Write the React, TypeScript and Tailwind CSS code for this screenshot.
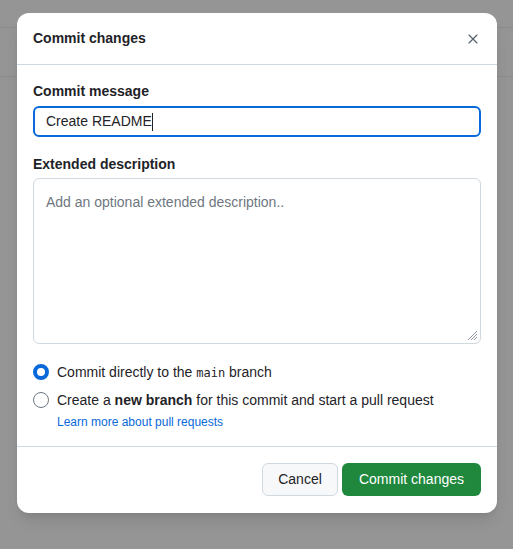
import React from 'react';
import { X } from 'lucide-react';

const Radio: React.FC<{ checked?: boolean }> = ({ checked }) =>
  checked ? (
    <span className="w-4 h-4 rounded-full border-[4px] border-[#0969da] bg-white shrink-0" />
  ) : (
    <span className="w-4 h-4 rounded-full border border-[#6e7781] bg-white shrink-0" />
  );

export default function App() {
  return (
    <div
      className="relative w-[513px] h-[549px] bg-[#959595] overflow-hidden"
      style={{ fontFamily: '"Liberation Sans", Arial, sans-serif' }}
    >
      {/* page behind the overlay */}
      <div className="absolute left-0 right-0 top-[27px] h-px bg-[#8a8a8a]" />
      <div className="absolute left-0 right-0 top-[76px] h-px bg-[#8a8a8a]" />

      <div className="absolute left-[17px] top-[13px] w-[480px] h-[500px] bg-white rounded-[12px] shadow-lg flex flex-col text-[#1f2328]">
        <div className="h-[52px] flex items-center justify-between pl-4 pr-4 border-b border-[#d1d9e0]">
          <h1 className="text-[14px] font-semibold">Commit changes</h1>
          <X className="w-4 h-4 text-[#59636e]" strokeWidth={1.75} />
        </div>

        <div className="px-4 pt-[16px] flex flex-col">
          <label className="text-[14px] font-semibold leading-5">Commit message</label>
          <div className="mt-[5px] h-[31px] rounded-[6px] border-2 border-[#0969da] flex items-center pl-[11px] text-[14px]">
            Create README<span className="w-px h-[18px] bg-[#1f2328]" />
          </div>

          <label className="mt-[17px] text-[14px] font-semibold leading-5">Extended description</label>
          <div className="relative mt-[4px] h-[166px] rounded-[6px] border border-[#d1d9e0] px-3 pt-[13px] text-[14px] text-[#6e7781]">
            Add an optional extended description..
            <svg className="absolute right-[2px] bottom-[2px]" width="12" height="12" viewBox="0 0 12 12">
              <path d="M11 2L2 11M11 5L5 11M11 8L8 11" stroke="#8c959f" strokeWidth="1" />
            </svg>
          </div>

          <div className="mt-[18px] flex items-center gap-2 text-[14px] h-5">
            <Radio checked />
            <span>
              Commit directly to the{' '}
              <span className="text-[12px]" style={{ fontFamily: '"DejaVu Sans Mono", monospace' }}>
                main
              </span>{' '}
              branch
            </span>
          </div>
          <div className="mt-[8px] flex items-center gap-2 text-[14px] h-5">
            <Radio />
            <span>
              Create a <span className="font-semibold">new branch</span> for this commit and start a pull request
            </span>
          </div>
          <a className="ml-6 text-[12px] text-[#0969da] leading-4 mt-[4px]">Learn more about pull requests</a>
        </div>

        <div className="mt-auto border-t border-[#d1d9e0] h-[67px] flex items-start pt-4 justify-end gap-1 px-4">
          <button className="h-[33px] w-[76px] rounded-[6px] border border-[#d1d9e0] bg-[#f6f8fa] text-[14px] font-medium">
            Cancel
          </button>
          <button className="h-[33px] w-[139px] rounded-[6px] bg-[#1f883d] text-white text-[14px] font-medium">
            Commit changes
          </button>
        </div>
      </div>
    </div>
  );
}
